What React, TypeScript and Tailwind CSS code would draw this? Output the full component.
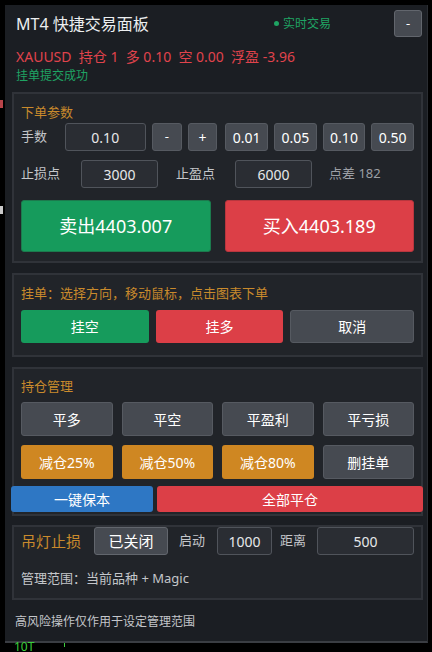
import React from "react";

const font = { fontFamily: '"Noto Sans", "Noto Sans CJK SC", sans-serif' };

function Btn({
  children,
  className = "",
}: {
  children: React.ReactNode;
  className?: string;
}) {
  return (
    <div
      className={
        "flex items-center justify-center rounded-[3px] text-white " + className
      }
    >
      {children}
    </div>
  );
}

function Input({ value, className = "" }: { value: string; className?: string }) {
  return (
    <div
      className={
        "flex h-[28px] items-center justify-center rounded-[3px] border border-[#50545b] bg-[#2a2d33] text-[14px] text-[#e6e7e9] " +
        className
      }
    >
      {value}
    </div>
  );
}

const grayBtn = "bg-[#464a51] border border-[#565a61]";

export default function App() {
  return (
    <div className="relative h-[652px] w-[432px] overflow-hidden bg-black" style={font}>
      {/* chart fragments peeking out behind the panel */}
      <div className="absolute left-0 top-[100px] h-[8px] w-[3px] bg-[#b8444a]" />
      <div className="absolute left-0 top-[206px] h-[8px] w-[3px] bg-[#c9c9c9]" />
      <div className="absolute left-[14px] top-[641px] text-[12px] leading-none text-[#3ccf3c]">
        10T
      </div>
      <div className="absolute left-[64px] top-[643px] h-[4px] w-[1px] bg-[#3ccf3c]" />

      <div className="ml-[5px] mt-[5px] flex h-[638px] w-[423px] flex-col border-b-2 border-r border-b-[#3a3d43] border-r-[#2a2d32] bg-[#1b1e23]">
        {/* header */}
        <div className="mt-[5px] flex h-[27px] items-center pl-[11px] pr-[5px]">
          <div className="text-[16px] text-[#eceef0]">MT4 快捷交易面板</div>
          <div className="ml-auto flex items-center gap-[4px] text-[12px] text-[#1fa463]">
            <span className="h-[5px] w-[5px] rounded-full bg-[#1fa463]" />
            实时交易
          </div>
          <div className="ml-[63px] flex h-[27px] w-[28px] items-center justify-center rounded-[3px] border border-[#62666d] bg-[#464a51] text-[13px] text-white">
            -
          </div>
        </div>
        <div className="mt-[11px] h-[18px] pl-[11px] text-[14px] leading-[18px] text-[#e0434c]">
          XAUUSD&nbsp; 持仓 1&nbsp; 多 0.10&nbsp; 空 0.00&nbsp; 浮盈 -3.96
        </div>
        <div className="mt-[2px] h-[16px] pl-[11px] text-[12px] leading-[16px] text-[#1fa463]">
          挂单提交成功
        </div>

        {/* order parameters */}
        <div className="ml-[7px] mr-[4px] mt-[8px] flex h-[171px] flex-col border-2 border-[#303339] bg-[#212429] px-[7px] pt-[9px]">
          <div className="h-[18px] text-[13px] leading-[18px] text-[#c98a2c]">下单参数</div>
          <div className="mt-[2px] flex h-[28px] items-center">
            <span className="w-[44px] text-[13px] text-[#c4c6ca]">手数</span>
            <Input value="0.10" className="w-[82px]" />
            <Btn className={"ml-[6px] h-[28px] w-[30px] text-[13px] " + grayBtn}>-</Btn>
            <Btn className={"ml-[6px] h-[28px] w-[30px] text-[14px] " + grayBtn}>+</Btn>
            <Btn className={"ml-[8px] h-[28px] w-[43px] text-[14px] " + grayBtn}>0.01</Btn>
            <Btn className={"ml-[6px] h-[28px] w-[43px] text-[14px] " + grayBtn}>0.05</Btn>
            <Btn className={"ml-[6px] h-[28px] w-[43px] text-[14px] " + grayBtn}>0.10</Btn>
            <Btn className={"ml-[6px] h-[28px] w-[43px] text-[14px] " + grayBtn}>0.50</Btn>
          </div>
          <div className="mt-[9px] flex h-[28px] items-center">
            <span className="w-[60px] text-[13px] text-[#c4c6ca]">止损点</span>
            <Input value="3000" className="w-[77px]" />
            <span className="ml-[18px] w-[59px] text-[13px] text-[#c4c6ca]">止盈点</span>
            <Input value="6000" className="w-[77px]" />
            <span className="ml-[17px] text-[13px] text-[#9c9fa4]">点差 182</span>
          </div>
          <div className="mt-[12px] flex h-[52px] gap-[14px]">
            <Btn className="w-[190px] border border-[#1c7a4d] bg-[#169b5c] text-[18px]">
              卖出4403.007
            </Btn>
            <Btn className="w-[190px] border border-[#b8363e] bg-[#dc3f47] text-[18px]">
              买入4403.189
            </Btn>
          </div>
        </div>

        {/* pending orders */}
        <div className="ml-[7px] mr-[4px] mt-[10px] flex h-[84px] flex-col border-2 border-[#303339] bg-[#212429] px-[7px] pt-[10px]">
          <div className="h-[16px] text-[13px] leading-[16px] text-[#c98a2c]">
            挂单：选择方向，移动鼠标，点击图表下单
          </div>
          <div className="mt-[9px] flex h-[33px] gap-[7px]">
            <Btn className="w-[128px] bg-[#169b5c] text-[14px]">挂空</Btn>
            <Btn className="w-[128px] bg-[#dc3f47] text-[14px]">挂多</Btn>
            <Btn className={"w-[124px] text-[14px] " + grayBtn}>取消</Btn>
          </div>
        </div>

        {/* position management */}
        <div className="ml-[7px] mr-[4px] mt-[10px] flex h-[149px] flex-col border-2 border-[#303339] bg-[#212429] px-[7px] pt-[9px]">
          <div className="h-[16px] text-[13px] leading-[16px] text-[#c98a2c]">持仓管理</div>
          <div className="mt-[8px] flex h-[34px] gap-[9px]">
            <Btn className={"w-[92px] text-[14px] " + grayBtn}>平多</Btn>
            <Btn className={"w-[92px] text-[14px] " + grayBtn}>平空</Btn>
            <Btn className={"w-[92px] text-[14px] " + grayBtn}>平盈利</Btn>
            <Btn className={"w-[92px] text-[14px] " + grayBtn}>平亏损</Btn>
          </div>
          <div className="mt-[9px] flex h-[34px] gap-[9px]">
            <Btn className="w-[92px] bg-[#cf8722] text-[14px]">减仓25%</Btn>
            <Btn className="w-[92px] bg-[#cf8722] text-[14px]">减仓50%</Btn>
            <Btn className="w-[92px] bg-[#cf8722] text-[14px]">减仓80%</Btn>
            <Btn className={"w-[92px] text-[14px] " + grayBtn}>删挂单</Btn>
          </div>
          <div className="-ml-[10px] -mr-[9px] mt-[7px] flex h-[26px] gap-[4px]">
            <Btn className="w-[142px] bg-[#2e77c4] text-[14px]">一键保本</Btn>
            <Btn className="flex-1 bg-[#dc3f47] text-[14px]">全部平仓</Btn>
          </div>
        </div>

        {/* trailing stop */}
        <div className="ml-[7px] mr-[4px] mt-[9px] flex h-[75px] flex-col border-2 border-[#303339] bg-[#212429] px-[7px]">
          <div className="flex h-[28px] items-center">
            <span className="w-[73px] text-[15px] text-[#c98a2c]">吊灯止损</span>
            <Btn className="h-[28px] w-[74px] border border-[#62666d] bg-[#464a51] text-[15px]">
              已关闭
            </Btn>
            <span className="ml-[11px] w-[38px] text-[13px] text-[#c4c6ca]">启动</span>
            <Input value="1000" className="w-[55px]" />
            <span className="ml-[8px] w-[37px] text-[13px] text-[#c4c6ca]">距离</span>
            <Input value="500" className="w-[97px]" />
          </div>
          <div className="mt-[15px] h-[16px] text-[13px] leading-[16px] text-[#c4c6ca]">
            管理范围：当前品种 + Magic
          </div>
        </div>

        <div className="mt-[14px] h-[16px] pl-[10px] text-[12px] leading-[16px] text-[#c4c6ca]">
          高风险操作仅作用于设定管理范围
        </div>
      </div>
    </div>
  );
}
